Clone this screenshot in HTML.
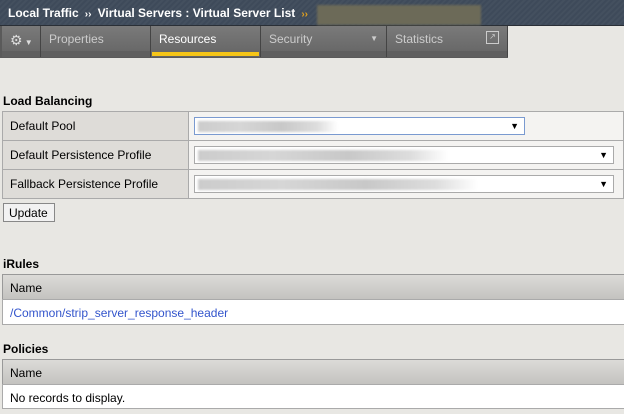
<!DOCTYPE html>
<html><head><style>
body{margin:0;width:624px;height:414px;background:#e8e7e3;font-family:"Liberation Sans",sans-serif;font-size:12px;position:relative;overflow:hidden;color:#000}
div{position:absolute;box-sizing:border-box}
.hdr{left:0;top:0;width:624px;height:26px;background:repeating-linear-gradient(135deg,#3e4a5a 0 2px,#44505f 2px 4px);border-bottom:1px solid #2a2f36}
.bc{left:8px;top:6px;color:#fff;font-weight:bold;font-size:12px;white-space:nowrap}
.tabs{left:0;top:26px;width:508px;height:32px;background:#5a5a5a}
.tab{top:26px;height:31px;background:linear-gradient(#7a7a7a,#646464);color:#ccc;font-size:12px;padding:6px 0 0 8px;border-right:1px solid #444}
.tab .bot{left:0;right:0;bottom:0;height:6px;background:#5f5f5f}
h3{position:absolute;margin:0;font-size:12px;font-weight:bold}
.lbl{background:#dedcd8;border:1px solid #aaa;padding:7px 0 0 7px}
.val{background:#f4f3f1;border:1px solid #aaa}
.sel{background:#fff;border:1px solid #aaa;height:18px}
.sel b{position:absolute;right:5px;top:3px;font-size:9px;line-height:10px}
.blur{top:3px;height:11px;left:3px;background:linear-gradient(90deg,#ccc,#d6d6d6 30%,#c8c8c8 60%,#ddd 85%,#fff);filter:blur(1px)}
.th{background:linear-gradient(#dcdbd8,#c4c3c0);border:1px solid #999;padding:6px 0 0 7px}
.td{background:#fff;border:1px solid #aaa;padding:6px 0 0 7px}
</style></head><body>
<div class="hdr"></div>
<div class="bc">Local Traffic <span style="font-size:10px">&nbsp;››&nbsp;</span> Virtual Servers : Virtual Server List <span style="color:#e0a020;font-size:10px">&nbsp;››</span></div>
<div style="left:317px;top:5px;width:164px;height:20px;background:#6c6a58;filter:blur(1px)"></div>
<div class="tabs"></div>
<div class="tab" style="left:2px;width:39px;padding-left:8px;color:#ddd;font-size:14px">⚙<span style="font-size:8px"> ▼</span><div class="bot"></div></div>
<div class="tab" style="left:41px;width:110px">Properties<div class="bot"></div></div>
<div class="tab" style="left:151px;width:110px;color:#fff">Resources<div class="bot" style="background:#f5c518;height:4px;left:1px;right:1px;bottom:1px"></div></div>
<div class="tab" style="left:261px;width:126px">Security<span style="position:absolute;right:8px;top:8px;font-size:8px">▼</span><div class="bot"></div></div>
<div class="tab" style="left:387px;width:121px">Statistics<span style="position:absolute;right:8px;top:5px;width:11px;height:11px;border:1px solid #ccc;font-size:8px;line-height:10px;text-align:center">↗</span><div class="bot"></div></div>

<h3 style="left:3px;top:94px">Load Balancing</h3>
<div class="lbl" style="left:2px;top:111px;width:187px;height:30px">Default Pool</div>
<div class="val" style="left:188px;top:111px;width:436px;height:30px"></div>
<div class="sel" style="left:194px;top:117px;width:331px;border-color:#7a9ad0"><div class="blur" style="width:140px"></div><b>▼</b></div>
<div class="lbl" style="left:2px;top:140px;width:187px;height:30px">Default Persistence Profile</div>
<div class="val" style="left:188px;top:140px;width:436px;height:30px"></div>
<div class="sel" style="left:194px;top:146px;width:420px"><div class="blur" style="width:250px"></div><b>▼</b></div>
<div class="lbl" style="left:2px;top:169px;width:187px;height:30px">Fallback Persistence Profile</div>
<div class="val" style="left:188px;top:169px;width:436px;height:30px"></div>
<div class="sel" style="left:194px;top:175px;width:420px"><div class="blur" style="width:280px"></div><b>▼</b></div>
<div style="left:3px;top:203px;width:52px;height:19px;border:1px solid #888;background:#f2f2f2;padding:2px 0 0 5px">Update</div>

<h3 style="left:3px;top:257px">iRules</h3>
<div class="th" style="left:2px;top:274px;width:624px;height:26px">Name</div>
<div class="td" style="left:2px;top:299px;width:624px;height:26px;color:#3355cc">/Common/strip_server_response_header</div>
<h3 style="left:3px;top:342px">Policies</h3>
<div class="th" style="left:2px;top:359px;width:624px;height:26px">Name</div>
<div class="td" style="left:2px;top:384px;width:624px;height:25px">No records to display.</div>
</body></html>
